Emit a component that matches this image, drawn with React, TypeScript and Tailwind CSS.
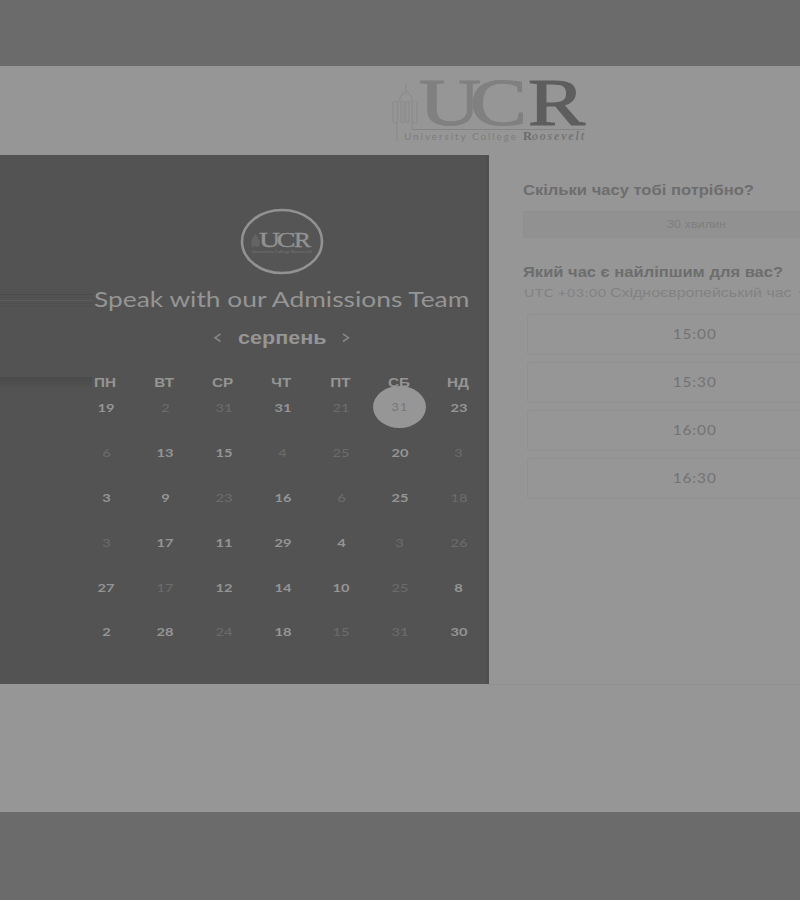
import React from "react";

const days = ["ПН", "ВТ", "СР", "ЧТ", "ПТ", "СБ", "НД"];

// "-" marks a date that cannot be booked, "*" the selected one.
const weeks = [
  ["19", "-2", "-31", "31", "-21", "*31", "23"],
  ["-6", "13", "15", "-4", "-25", "20", "-3"],
  ["3", "9", "-23", "16", "-6", "25", "-18"],
  ["-3", "17", "11", "29", "4", "-3", "-26"],
  ["27", "-17", "12", "14", "10", "-25", "8"],
  ["2", "28", "-24", "18", "-15", "-31", "30"],
];

const slots = ["15:00", "15:30", "16:00", "16:30"];

function Tower() {
  return (
    <g fill="none" stroke="#8c8c8c" strokeWidth="1.2">
      <path d="M26 23v8M20 43v-5q1-3 4-5l2-2 2 2q3 2 4 5v5" />
      <rect x="13" y="41" width="4.5" height="22" rx="2" />
      <rect x="21" y="41" width="3" height="22" rx="1.5" />
      <rect x="26" y="41" width="3" height="22" rx="1.5" />
      <rect x="32" y="41" width="5" height="22" rx="2" />
      <path d="M17 62v20M32 62v7.5" />
    </g>
  );
}

function Logo() {
  return (
    <svg width="220" height="89" viewBox="0 6 220 89" className="ml-[380px] block overflow-visible">
      <Tower />
      <g fontFamily="'Liberation Serif', serif" fontSize="67">
        <text x="39" y="65" textLength="62" lengthAdjust="spacingAndGlyphs" fill="#808080" stroke="#808080" strokeWidth="1.2">U</text>
        <text x="90" y="65" textLength="57" lengthAdjust="spacingAndGlyphs" fill="#808080" stroke="#808080" strokeWidth="1.2">C</text>
        <text x="148" y="65" textLength="57" lengthAdjust="spacingAndGlyphs" fill="#5e5e5e" stroke="#5e5e5e" strokeWidth="1.2">R</text>
      </g>
      <path d="M32 69.5h173" stroke="#848484" />
      <text x="24" y="80" textLength="112" fontSize="10" fontFamily="Lato, sans-serif" fill="#7d7d7d">University College</text>
      <text x="143" y="80" textLength="9" fontSize="11.5" fontWeight="700" fontFamily="'Liberation Serif', serif" lengthAdjust="spacingAndGlyphs" fill="#6c6c6c">R</text>
      <text x="152" y="80" textLength="52" fontSize="12" fontWeight="700" fontStyle="italic" fontFamily="'Liberation Serif', serif" fill="#777">oosevelt</text>
    </svg>
  );
}

function Badge() {
  return (
    <svg width="84" height="68" viewBox="0 0 84 68" className="block">
      <ellipse cx="42" cy="34.5" rx="40" ry="31.5" fill="#555" stroke="#929292" strokeWidth="2.6" />
      <path d="M11.5 39.5v-6l4-7 4 7v6z" fill="#646464" />
      <g fontFamily="'Liberation Serif', serif" fontSize="22" fill="#929292" stroke="#929292" strokeWidth="0.4">
        <text x="19" y="40" textLength="21" lengthAdjust="spacingAndGlyphs">U</text>
        <text x="36.5" y="40" textLength="19" lengthAdjust="spacingAndGlyphs">C</text>
        <text x="54" y="40" textLength="17" lengthAdjust="spacingAndGlyphs">R</text>
      </g>
      <text x="12" y="45.5" textLength="60" lengthAdjust="spacingAndGlyphs" fontSize="4.5" fontFamily="Lato, sans-serif" fill="#777">University College Roosevelt</text>
    </svg>
  );
}

function DateCell({ value }: { value: string }) {
  const muted = value[0] === "-";
  const selected = value[0] === "*";
  const label = value.replace(/[-*]/, "");
  if (selected) {
    return (
      <div className="flex items-center justify-center">
        <div className="flex h-[42px] w-[53px] shrink-0 items-center justify-center rounded-[50%] bg-[#969696]">
          <span className="scale-x-[1.05] text-[12px] tracking-[1px] text-[#777]">{label}</span>
        </div>
      </div>
    );
  }
  return (
    <div className="flex items-center justify-center pt-[2px]">
      <span className={"scale-x-[1.22] text-[12px] " + (muted ? "font-medium text-[#6b6b6b]" : "font-bold text-[#959595]")}>{label}</span>
    </div>
  );
}

function Calendar() {
  return (
    <section className="flex h-[529px] w-[489px] shrink-0 flex-col border-r-[3px] border-[#4f4f4f] bg-[#535353]">
      <div className="ml-[240px] mt-[52px]"><Badge /></div>
      <div className="flex h-[50px] items-center">
        <div className="flex h-[22px] w-[92px] shrink-0 flex-col justify-center gap-[2px]">
          <div className="h-px bg-[#4b4b4b]" />
          <div className="h-px bg-[#4d4d4d]" />
          <div className="h-px bg-[#5a5a5a]" />
          <div className="h-px bg-[#4d4d4d]" />
          <div className="h-px bg-[#4e4e4e]" />
        </div>
        <h1 className="ml-[2px] origin-left scale-x-[1.255] whitespace-nowrap pb-[2px] text-[21px] leading-[30px] text-[#959595]">Speak with our Admissions Team</h1>
      </div>
      <div className="flex h-[26px] items-center text-[#959595]">
        <svg width="10" height="12" viewBox="0 0 10 12" className="ml-[213px]"><path d="M7.5 2 2 5.7l5.5 3.8" fill="none" stroke="#858585" strokeWidth="1.6" /></svg>
        <span className="ml-[15px] w-[88px] origin-left scale-x-[1.135] whitespace-nowrap font-['Liberation_Sans',sans-serif] text-[19px] font-bold leading-6">серпень</span>
        <svg width="10" height="12" viewBox="0 0 10 12" className="ml-[15px]"><path d="M2 2l5.5 3.7L2 9.5" fill="none" stroke="#858585" strokeWidth="1.6" /></svg>
      </div>
      <div className="mt-[23px] flex h-[18px] items-center">
        <div className="h-[12px] w-[92px] shrink-0 bg-linear-to-b from-[#4a4a4a] to-[#535353]" />
        <div className="-ml-[16px] grid w-[411px] shrink-0 grid-cols-7">
          {days.map((d) => (
            <div key={d} className="flex justify-center">
              <span className="scale-x-[1.22] font-['Liberation_Sans',sans-serif] text-[12.5px] font-bold leading-[18px] text-[#959595]">{d}</span>
            </div>
          ))}
        </div>
      </div>
      <div className="-mt-[7px] ml-[77px] grid w-[411px] auto-rows-[44.8px] grid-cols-7">
        {weeks.flat().map((v, i) => <DateCell key={i} value={v} />)}
      </div>
    </section>
  );
}

function Booking() {
  return (
    <section className="h-[530px] w-[311px] overflow-hidden border-b border-[#919191] font-['Liberation_Sans',sans-serif]">
      <div className="ml-[34px] w-[400px] pt-[25px]">
        <h2 className="w-fit origin-left scale-x-[1.183] whitespace-nowrap text-[14px] font-bold leading-[20px] text-[#6d6d6d]">Скільки часу тобі потрібно?</h2>
        <div className="mt-[11px] flex h-[27px] w-[348px] items-center justify-center rounded-[2px] border border-[#8f8f8f] bg-[#919191]">
          <span className="scale-x-[1.2] text-[10.5px] text-[#7e7e7e]">30 хвилин</span>
        </div>
        <h2 className="mt-[24px] w-fit origin-left scale-x-[1.18] whitespace-nowrap text-[14px] font-bold leading-[20px] text-[#6d6d6d]">Який час є найліпшим для вас?</h2>
        <p className="mt-[2px] flex items-baseline whitespace-nowrap pl-[1px] text-[12px] leading-[18px] text-[#828282]">
          <span className="w-[86px] shrink-0 origin-left scale-x-[1.16] font-[Lato] tracking-[0.7px]">UTC +03:00</span>
          <span className="w-[188px] shrink-0 origin-left scale-x-[1.33]">Східноєвропейський час</span>
          <svg width="6" height="4" viewBox="0 0 6 4" className="self-center"><path d="M0 0h6L3 4z" fill="#8a8a8a" /></svg>
        </p>
        <div className="ml-[4px] mt-[12px] flex w-[336px] flex-col gap-[7px] font-[Lato,sans-serif]">
          {slots.map((t) => (
            <div key={t} className="flex h-[41px] items-center justify-center rounded-[2px] border border-[#919191]">
              <span className="scale-x-[1.18] pt-px text-[13px] tracking-[0.8px] text-[#727272]">{t}</span>
            </div>
          ))}
        </div>
      </div>
    </section>
  );
}

export default function App() {
  return (
    <div className="flex h-[900px] w-[800px] flex-col overflow-hidden bg-[#6b6b6b] pt-[66px] font-[Lato,sans-serif]">
      <main className="h-[746px] bg-[#969696]">
        <header className="h-[89px]"><Logo /></header>
        <div className="flex items-start">
          <Calendar />
          <Booking />
        </div>
      </main>
    </div>
  );
}
